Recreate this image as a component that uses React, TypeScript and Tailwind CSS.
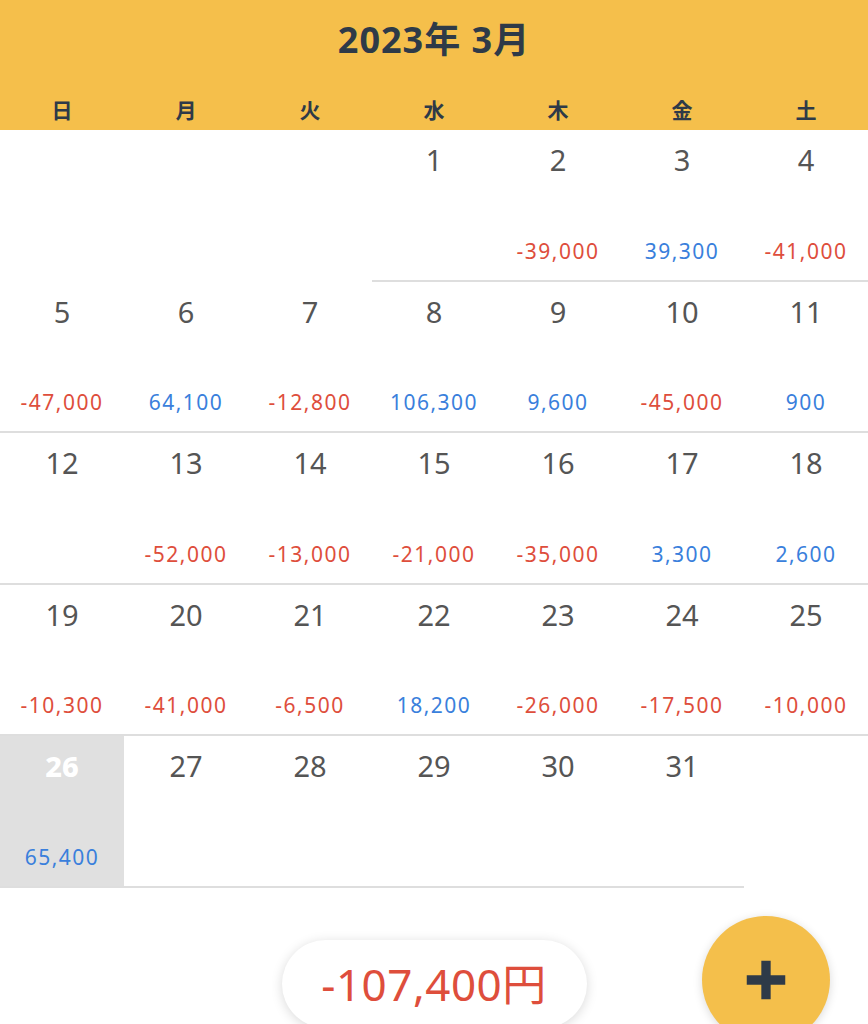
import { Plus } from 'lucide-react'

type Day = { d: number; amt?: number }

const weekdays = ['日', '月', '火', '水', '木', '金', '土']

const amounts: { [key: number]: number } = {
  2: -39000, 3: 39300, 4: -41000,
  5: -47000, 6: 64100, 7: -12800, 8: 106300, 9: 9600, 10: -45000, 11: 900,
  13: -52000, 14: -13000, 15: -21000, 16: -35000, 17: 3300, 18: 2600,
  19: -10300, 20: -41000, 21: -6500, 22: 18200, 23: -26000, 24: -17500, 25: -10000,
  26: 65400,
}

const fmt = (n: number) => (n < 0 ? '-' : '') + Math.abs(n).toLocaleString('en-US')

export default function App() {
  // March 2023 starts on Wednesday
  const cells: (Day | null)[] = [null, null, null]
  for (let d = 1; d <= 31; d++) cells.push({ d, amt: amounts[d] })
  while (cells.length % 7) cells.push(null)

  const today = 26

  return (
    <div className="min-h-screen bg-white overflow-hidden relative" style={{ fontFamily: '"Noto Sans", "Noto Sans CJK JP", sans-serif' }}>
      {/* Header */}
      <div className="bg-[#f5bf4b] h-[130px] flex flex-col">
        <h1 className="text-[36px] font-bold text-[#2e3a48] text-center pt-[14px] leading-[52px] tracking-[1px]">
          2023年 3月
        </h1>
        <div className="grid grid-cols-7 mt-[30px]">
          {weekdays.map((w) => (
            <div key={w} className="text-center text-[21px] font-bold text-[#2e3a48] leading-[28px]">
              {w}
            </div>
          ))}
        </div>
      </div>

      {/* Calendar grid */}
      <div className="grid grid-cols-7">
        {cells.map((c, i) =>
          c ? (
            <div
              key={i}
              className={`h-[151.6px] border-b-2 border-[#dedede] flex flex-col items-center ${c.d === today ? 'bg-[#e0e0e0]' : ''}`}
            >
              <span
                className={`mt-[11px] text-[29px] leading-[38px] ${c.d === today ? 'text-white font-extrabold' : 'text-[#555555]'}`}
              >
                {c.d}
              </span>
              {c.amt !== undefined && (
                <span
                  className={`mt-auto mb-[15px] text-[21px] leading-[28px] tracking-[1.5px] ${c.amt < 0 ? 'text-[#de4e3c]' : 'text-[#3a7fdc]'}`}
                >
                  {fmt(c.amt)}
                </span>
              )}
            </div>
          ) : (
            <div key={i} className="h-[151.6px]" />
          )
        )}
      </div>

      {/* Total */}
      <div className="flex justify-center mt-[52px]">
        <div className="w-[305px] h-[88px] rounded-full bg-white shadow-[0_2px_12px_rgba(0,0,0,0.15)] flex items-center justify-center">
          <span className="text-[44px] text-[#de4e3c] leading-none tracking-[0.5px]">-107,400円</span>
        </div>
      </div>

      {/* FAB */}
      <button className="absolute left-[702px] top-[916px] w-[128px] h-[128px] rounded-full bg-[#f4bf4b] shadow-[0_2px_10px_rgba(0,0,0,0.15)] flex items-center justify-center">
        <Plus className="w-[66px] h-[66px] text-[#2e3a48]" strokeWidth={3.4} strokeLinecap="butt" />
      </button>
    </div>
  )
}
